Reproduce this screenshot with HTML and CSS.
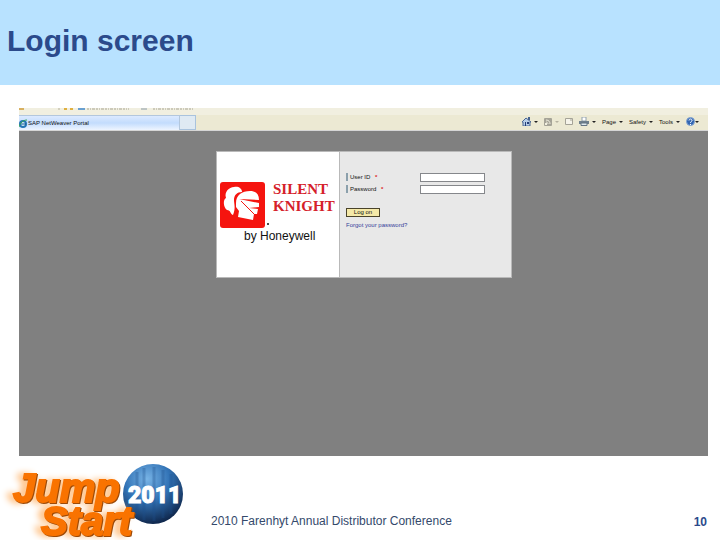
FILE: index.html
```
<!DOCTYPE html>
<html lang="en">

<head>
    <meta charset="UTF-8">
    <title>Login screen</title>
    <link rel="stylesheet" href="styles.css">
</head>

<body>

    <header class="title">
        <h1>Login screen</h1>
    </header>

    <main class="browser">

        <!-- cut off favorites bar -->
        <div class="favorites">
            <svg width="180" height="2" viewBox="0 0 180 2">
                <path d="M0 1h5" stroke="#d8b060" stroke-width="2" />
                <path d="M40 0v2" stroke="#b5b19c" />
                <path d="M45 1h3M51 1h3" stroke="#e0b040" stroke-width="2" />
                <path d="M59 1h7" stroke="#6aa0d0" stroke-width="2" />
                <path d="M68 1h42M134 1h40" stroke="#a8a594" stroke-dasharray="2 1 1 1 3 1" />
                <path d="M122 1h6" stroke="#8a9aa8" />
            </svg>
        </div>

        <div class="toolbar">
            <div class="tab">
                <svg width="8" height="9" viewBox="0 0 8 9">
                    <circle cx="4" cy="5" r="3" fill="#d8effa" stroke="#2474b4" stroke-width="2" />
                    <path d="M2 5h5" stroke="#175a98" />
                    <path d="M0 8C1 4 4 1 8 1" fill="none" stroke="#35a45c" />
                </svg>
                <span>SAP NetWeaver Portal</span>
            </div>
            <div class="newtab"></div>

            <nav class="commands">
                <button type="button" aria-label="Home">
                    <svg width="9" height="9" viewBox="0 0 9 9">
                        <path d="M0 5 4 1l5 4H8v4H1V5z" fill="#b8cee8" stroke="#4a6694" />
                        <path d="M6 0h2v3H6z" fill="#46628f" />
                        <path d="M3 5h1v4H3zM5 5h2v2H5z" fill="#263f78" />
                    </svg>
                    <i></i>
                </button>
                <button type="button" class="off" aria-label="Feeds">
                    <svg width="8" height="8" viewBox="0 0 8 8">
                        <rect width="8" height="8" rx="1" fill="#a5a397" />
                        <path d="M2 2c3 0 4 2 4 4M2 4c1 0 2 1 2 2" fill="none" stroke="#f1efdf" />
                        <path d="M1 5h2v2H1z" fill="#f1efdf" />
                    </svg>
                    <i></i>
                </button>
                <button type="button" aria-label="Read mail">
                    <svg width="8" height="7" viewBox="0 0 8 7">
                        <path d="M.5.5h7v6h-7z" fill="#f6f4ea" stroke="#a5a397" />
                        <path d="M5 2h2" stroke="#a5a397" />
                    </svg>
                </button>
                <button type="button" aria-label="Print">
                    <svg width="10" height="9" viewBox="0 0 10 9">
                        <path d="M3 0h4v4H3z" fill="#fff" stroke="#91a0ac" />
                        <path d="M0 4h10v3H0z" fill="#6e7f8c" />
                        <path d="M2 6h6v2.500H2z" fill="#dfe9ef" stroke="#637482" />
                    </svg>
                    <i></i>
                </button>
                <button type="button">Page<i></i></button>
                <button type="button">Safety<i></i></button>
                <button type="button">Tools<i></i></button>
                <button type="button" class="help" aria-label="Help">
                    <svg width="9" height="9" viewBox="0 0 9 9">
                        <circle cx="4.500" cy="4.500" r="4" fill="#3266b2" stroke="#83a4d2" />
                        <path d="M3 3.500C3 1.500 6 1.500 6 3.500 6 4.500 4.500 4.500 4.500 6M4.500 7v1" fill="none" stroke="#fff" />
                    </svg>
                    <i></i>
                </button>
            </nav>
        </div>

        <section class="portal">
            <div class="login">
                <div class="brand">
                    <svg width="122" height="124" viewBox="0 0 122 124" role="img" aria-label="Silent Knight by Honeywell">
                        <rect x="3" y="30" width="45" height="46" rx="3" fill="#f5140f" />
                        <path d="M16 63C13 62 14 58 10 58 6 55 6 47 9 46 7 40 12 35 17 35c4-1 8 1 8 5-5 0-8 3-8 8 0 4 2 8-1 15z" fill="#fff" />
                        <path d="M19 51c0-8 6-12 14-12 6 0 9 3 9 9L22 47l20 4v4l-10 1 9 1-1 5h-3l-1 6-15-3 1-6-3-4v-3z" fill="#fff" />
                        <path d="M24 49l13 13" fill="none" stroke="#f5140f" />
                        <circle cx="51" cy="72" r="1" fill="#111" />
                        <text class="name" x="56" y="42">SILENT</text>
                        <text class="name" x="56" y="59">KNIGHT</text>
                        <text class="by" x="27" y="88">by Honeywell</text>
                    </svg>
                </div>
                <form>
                    <div class="field">
                        <label for="user">User ID <b>*</b></label>
                        <input type="text" id="user">
                    </div>
                    <div class="field">
                        <label for="pass">Password <b>*</b></label>
                        <input type="password" id="pass">
                    </div>
                    <button type="submit" class="logon">Log on</button>
                    <a href="#">Forgot your password?</a>
                </form>
            </div>
        </section>
    </main>

    <footer class="bottom">
        <svg class="jumpstart" width="190" height="82" viewBox="0 0 190 82" role="img" aria-label="Jump Start 2011">
            <defs>
                <radialGradient id="ball" cx="40%" cy="25%" r="75%">
                    <stop offset="0" stop-color="#78b4e6" />
                    <stop offset=".5" stop-color="#3273b6" />
                    <stop offset="1" stop-color="#10294f" />
                </radialGradient>
            </defs>
            <circle cx="153" cy="36" r="30" fill="url(#ball)" />
            <path d="M137 14v42M144 10v52M154 9v54M163 12v48M171 16v40" stroke="#1d4f8c" stroke-width="3" opacity=".3" />
            <text class="year" x="128" y="45">2011</text>
            <g class="words">
                <text x="13" y="44">Jump</text>
                <text x="41" y="77">Start</text>
            </g>
        </svg>
        <p>2010 Farenhyt Annual Distributor Conference</p>
        <span class="number">10</span>
    </footer>

</body>

</html>
```
FILE: styles.css
```
* {
    box-sizing: border-box;
}

body {
    margin: 0;
    background: #fff;
    font-family: "Liberation Sans", Arial, sans-serif;
    color: #2b4a8b;
}

.title {
    height: 85px;
    padding: 22px 7px;
    background: #b8e2ff;
}

.title h1 {
    margin: 0;
    font-size: 30px;
    line-height: 38px;
}

/* browser window */
.browser {
    margin: 23px 12px 0 19px;
    color: #111;
}

.favorites {
    height: 7px;
    background: #f1efe0;
}

.favorites svg {
    display: block;
}

.toolbar {
    display: flex;
    height: 16px;
    background: #ece9d3;
    border-bottom: 1px solid #d5d5d5;
    font-size: 6px;
}

.tab {
    display: flex;
    align-items: center;
    gap: 1px;
    width: 161px;
    border: 1px solid #b3c7dd;
    border-left: 0;
    border-bottom: 0;
    background: linear-gradient(#dceaff, #c3dcfd 50%, #eef5ff);
}

.newtab {
    width: 16px;
    border: 1px solid #a9c3dd;
    border-left: 0;
    background: #dfeaf3;
}

.commands {
    display: flex;
    align-items: center;
    margin-left: auto;
    padding: 0 9px 2px 0;
    gap: 6px;
}

.commands button {
    display: flex;
    align-items: center;
    gap: 3px;
    padding: 0;
    border: 0;
    background: none;
    font: 6px "Liberation Sans", Arial, sans-serif;
    color: #111;
}

.commands i {
    border: 2px solid transparent;
    border-top-color: #222;
    border-bottom: 0;
}

.commands .off i {
    border-top-color: #b5b2a0;
}

.commands .help {
    gap: 0;
}

.portal {
    height: 325px;
    padding-top: 20px;
    background: #808080;
}

.login {
    display: grid;
    grid-template-columns: 123px 1fr;
    width: 296px;
    height: 127px;
    margin-left: 197px;
    border: 1px solid #b9b9b9;
    background: #e8e8e8;
}

.brand {
    background: #fff;
    border-right: 1px solid #b9b9b9;
}

.brand svg {
    display: block;
}

.name {
    font: bold 15px "Liberation Serif", "Times New Roman", serif;
    fill: #d5202a;
}

.by {
    font-size: 12px;
    fill: #111;
}

.login form {
    padding: 19px 6px;
    font-size: 6px;
}

.field {
    display: flex;
    align-items: center;
    height: 12px;
}

.field label {
    width: 74px;
    padding-left: 2px;
    border-left: 2px solid #8ba0ac;
    line-height: 8px;
}

.field b {
    margin-left: 3px;
    color: #d22;
}

.field input {
    width: 65px;
    height: 9px;
    padding: 0 1px;
    border: 1px solid #85878b;
    background: #fff;
    font-size: 6px;
}

.logon {
    display: block;
    width: 34px;
    height: 9px;
    margin: 13px 0 4px;
    padding: 0;
    border: 1px solid #4a432a;
    background: #f5e9a8;
    font: 6px/7px "Liberation Sans", Arial, sans-serif;
    color: #111;
}

.login a {
    display: block;
    color: #34419a;
    line-height: 8px;
    text-decoration: none;
}

/* slide footer */
.bottom {
    display: flex;
    align-items: flex-start;
    padding-right: 13px;
}

.jumpstart {
    margin-top: 2px;
}

.words {
    font: italic bold 40px "Liberation Sans", Arial, sans-serif;
    fill: #f97300;
    stroke: #f97300;
    stroke-width: 2px;
    filter: drop-shadow(1px 1px 0 #9c4a08) drop-shadow(-6px 0 3px #ffc48a);
}

.year {
    font: 900 23px Roboto, sans-serif;
    fill: #fff;
    stroke: #fff;
    stroke-width: 1px;
}

.bottom p {
    margin: 58px 0 0 21px;
    font-size: 12px;
    line-height: 14px;
    color: #34496b;
}

.number {
    margin: 59px 0 0 auto;
    font-size: 12px;
    line-height: 14px;
    font-weight: bold;
}
```
